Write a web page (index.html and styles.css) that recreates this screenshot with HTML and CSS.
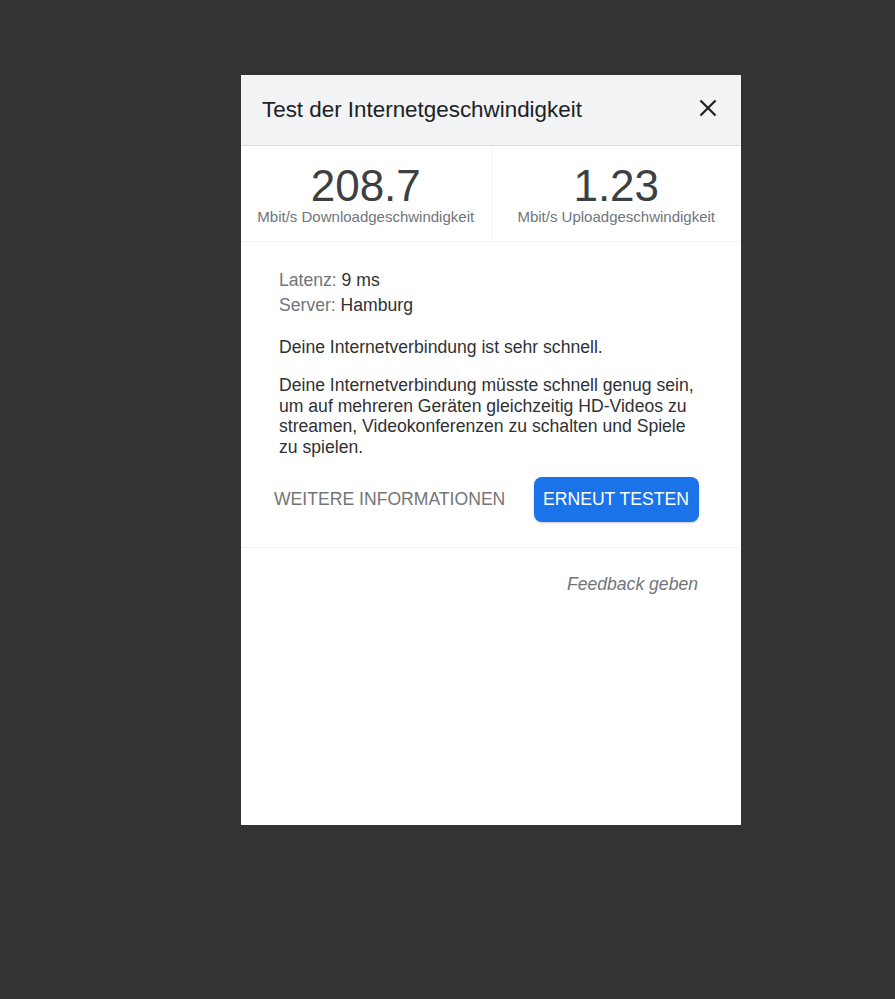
FILE: index.html
```html
<!DOCTYPE html>
<html lang="de">
<head>
<meta charset="utf-8">
<title>Test der Internetgeschwindigkeit</title>
<link rel="stylesheet" href="styles.css">
</head>
<body>
<div class="panel">
  <div class="header">
    <div class="title">Test der Internetgeschwindigkeit</div>
    <div class="close" aria-label="Schließen">
      <svg width="18" height="18" viewBox="0 0 18 18"><path d="M1.5 1.5L16.5 16.5M16.5 1.5L1.5 16.5" stroke="#202124" stroke-width="2.2" fill="none"/></svg>
    </div>
  </div>
  <div class="stats">
    <div class="stat">
      <div class="num">208.7</div>
      <div class="unit">Mbit/s Downloadgeschwindigkeit</div>
    </div>
    <div class="stat">
      <div class="num">1.23</div>
      <div class="unit">Mbit/s Uploadgeschwindigkeit</div>
    </div>
  </div>
  <div class="content">
    <div class="meta"><span class="label">Latenz:</span> 9 ms</div>
    <div class="meta"><span class="label">Server:</span> Hamburg</div>
    <p class="lead">Deine Internetverbindung ist sehr schnell.</p>
    <p class="desc">Deine Internetverbindung müsste schnell genug sein, um auf mehreren Geräten gleichzeitig HD-Videos zu streamen, Videokonferenzen zu schalten und Spiele zu spielen.</p>
    <div class="actions">
      <span class="more">WEITERE INFORMATIONEN</span>
      <span class="retry">ERNEUT TESTEN</span>
    </div>
  </div>
  <div class="footer">
    <span class="feedback">Feedback geben</span>
  </div>
</div>
</body>
</html>
```
FILE: styles.css
```css
html, body {
  margin: 0;
  padding: 0;
  background: #333333;
}
body {
  padding: 75px 0 0 241px;
  font-family: "Liberation Sans", Arial, sans-serif;
  height: 999px;
  box-sizing: border-box;
}
.panel {
  width: 500px;
  height: 750px;
  background: #ffffff;
  display: flex;
  flex-direction: column;
}
.header {
  height: 70px;
  flex: none;
  background: #f1f3f4;
  border-bottom: 1px solid #dadce0;
  display: flex;
  align-items: center;
  justify-content: space-between;
  padding: 0 24px 0 21px;
}
.title {
  font-size: 22.4px;
  line-height: 1;
  color: #202124;
}
.close {
  width: 18px;
  height: 18px;
  display: flex;
  margin-top: -4px;
}
.stats {
  display: flex;
  flex: none;
  height: 95px;
  border-bottom: 1px solid #f1f3f4;
}
.stat {
  flex: 1;
  display: flex;
  flex-direction: column;
  align-items: center;
  padding-top: 18px;
}
.stat + .stat {
  border-left: 1px solid #f1f3f4;
}
.num {
  font-size: 44px;
  line-height: 44px;
  color: #3c4043;
}
.unit {
  font-size: 15px;
  line-height: 18px;
  color: #70757a;
}
.content {
  padding: 26px 40px 25px 38px;
  border-bottom: 1px solid #f1f3f4;
  color: #303134;
}
.meta {
  font-size: 17.6px;
  line-height: 25px;
}
.label {
  color: #70757a;
}
.lead {
  margin: 19px 0 0;
  font-size: 17.6px;
  line-height: 20.5px;
}
.desc {
  margin: 17.5px 0 0;
  font-size: 17.6px;
  line-height: 20.5px;
}
.actions {
  display: flex;
  justify-content: space-between;
  align-items: center;
  margin-top: 20px;
  margin-left: -5px;
  margin-right: 2px;
}
.more {
  font-size: 17.6px;
  color: #757575;
}
.retry {
  background: #1a73e8;
  color: #ffffff;
  font-size: 17.6px;
  height: 45px;
  display: flex;
  align-items: center;
  padding: 0 10px 0 9px;
  border-radius: 8px;
  box-shadow: 0 1px 2px rgba(60, 64, 67, 0.3);
}
.footer {
  display: flex;
  justify-content: flex-end;
  padding: 26px 43px 0 0;
}
.feedback {
  font-size: 17.6px;
  line-height: 20px;
  font-style: italic;
  color: #70757a;
}
```
